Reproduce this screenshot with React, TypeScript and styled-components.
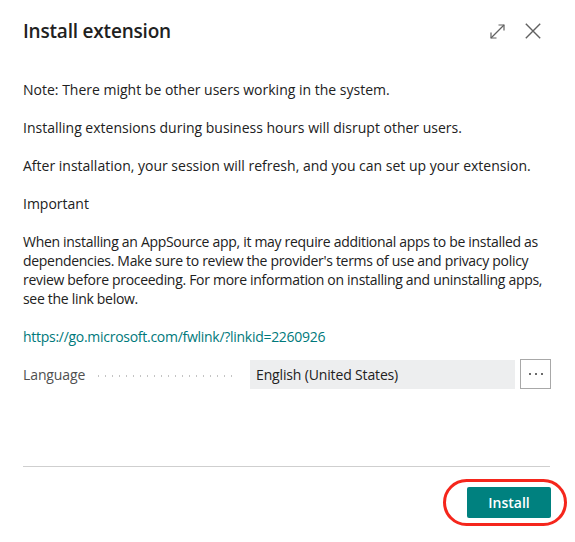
import React from "react";
import styled, { createGlobalStyle } from "styled-components";

const Global = createGlobalStyle`
  html, body { margin: 0; padding: 0; background: #ffffff; }
  body { font-family: "Open Sans", "Noto Sans", sans-serif; color: #212121; }
`;

const Dialog = styled.div`
  width: 575px;
  height: 542px;
  box-sizing: border-box;
  display: flex;
  flex-direction: column;
  padding: 0 24px 0 23px;
  background: #fff;
`;

const Header = styled.header`
  display: flex;
  align-items: center;
  justify-content: space-between;
  height: 62px;
`;

const Title = styled.h1`
  margin: 0;
  font-size: 19px;
  font-weight: 600;
  line-height: 24px;
  color: #212121;
  letter-spacing: -0.2px;
`;

const HeaderActions = styled.div`
  display: flex;
  align-items: center;
  gap: 20px;
  margin-right: 10px;
`;

const IconButton = styled.button`
  padding: 0;
  margin: 0;
  border: 0;
  background: transparent;
  display: flex;
  align-items: center;
  justify-content: center;
  color: #616161;
  cursor: pointer;
`;

const Body = styled.div`
  padding-top: 18px;
  flex: 1;
`;

const Para = styled.p<{ $tight?: boolean }>`
  margin: 0 0 19px;
  font-size: 14px;
  line-height: 19px;
  color: #212121;
  letter-spacing: ${(p) => (p.$tight ? "-0.3px" : "0")};
`;

const Link = styled.a`
  display: block;
  margin: 0 0 13px;
  font-size: 14px;
  line-height: 19px;
  color: #00797b;
  text-decoration: none;
  letter-spacing: -0.28px;
`;

const FieldRow = styled.div`
  display: grid;
  grid-template-columns: 222px 1fr 31px;
  column-gap: 5px;
  align-items: center;
`;

const FieldLabel = styled.div`
  display: flex;
  align-items: center;
  font-size: 14px;
  line-height: 19px;
  color: #505050;
  letter-spacing: -0.1px;
`;

const Leader = styled.span`
  flex: 1;
  height: 2px;
  margin: 3px 10px 0 10px;
  background-image: radial-gradient(circle, #c4c4c4 0.7px, transparent 1.1px);
  background-size: 7px 2px;
  background-repeat: repeat-x;
`;

const FieldValue = styled.div`
  height: 29px;
  box-sizing: border-box;
  background: #edeeef;
  display: flex;
  align-items: center;
  padding-left: 6px;
  font-size: 14px;
  color: #212121;
  letter-spacing: -0.15px;
`;

const MoreButton = styled.button`
  height: 30px;
  width: 31px;
  box-sizing: border-box;
  border: 1px solid #a8a8a8;
  background: #fff;
  padding: 0;
  display: flex;
  align-items: center;
  justify-content: center;
  gap: 4px;
`;

const Dot = styled.span`
  width: 2px;
  height: 2px;
  border-radius: 50%;
  background: #3a3a3a;
`;

const Footer = styled.footer`
  border-top: 1px solid #cfcfcf;
  margin-right: 1px;
  height: 76px;
  box-sizing: border-box;
  display: flex;
  justify-content: flex-end;
  padding-top: 20px;
`;

const Highlight = styled.div`
  position: relative;
  height: 31px;
  &::after {
    content: "";
    position: absolute;
    top: -8px;
    bottom: -8px;
    left: -24px;
    right: -17px;
    border: 3.5px solid #f5261c;
    border-radius: 26px;
    pointer-events: none;
  }
`;

const PrimaryButton = styled.button`
  width: 84px;
  height: 31px;
  margin-right: -1px;
  border: 0;
  border-radius: 2px;
  background: #00817f;
  color: #fff;
  font-family: "Open Sans", sans-serif;
  font-size: 14px;
  font-weight: 600;
  cursor: pointer;
`;

const ExpandIcon = () => (
  <svg width="15" height="15" viewBox="0 0 15 15" fill="none" stroke="currentColor" strokeWidth="1.2">
    <path d="M1 14 L14 1" />
    <path d="M8.5 1 H14 V6.5" />
    <path d="M1 8.5 V14 H6.5" />
  </svg>
);

const CloseIcon = () => (
  <svg width="16" height="16" viewBox="0 0 16 16" fill="none" stroke="currentColor" strokeWidth="1.4">
    <path d="M0.8 0.8 L15.2 15.2 M15.2 0.8 L0.8 15.2" />
  </svg>
);

export default function App() {
  return (
    <>
      <Global />
      <Dialog>
        <Header>
          <Title>Install extension</Title>
          <HeaderActions>
            <IconButton aria-label="Expand"><ExpandIcon /></IconButton>
            <IconButton aria-label="Close"><CloseIcon /></IconButton>
          </HeaderActions>
        </Header>
        <Body>
          <Para>Note: There might be other users working in the system.</Para>
          <Para>Installing extensions during business hours will disrupt other users.</Para>
          <Para>After installation, your session will refresh, and you can set up your extension.</Para>
          <Para>Important</Para>
          <Para $tight>
            When installing an AppSource app, it may require additional apps to be installed as
            dependencies. Make sure to review the provider's terms of use and privacy policy
            review before proceeding. For more information on installing and uninstalling apps,
            see the link below.
          </Para>
          <Link href="#">https://go.microsoft.com/fwlink/?linkid=2260926</Link>
          <FieldRow>
            <FieldLabel>
              Language
              <Leader />
            </FieldLabel>
            <FieldValue>English (United States)</FieldValue>
            <MoreButton aria-label="More">
              <Dot />
              <Dot />
              <Dot />
            </MoreButton>
          </FieldRow>
        </Body>
        <Footer>
          <Highlight>
            <PrimaryButton>Install</PrimaryButton>
          </Highlight>
        </Footer>
      </Dialog>
    </>
  );
}
